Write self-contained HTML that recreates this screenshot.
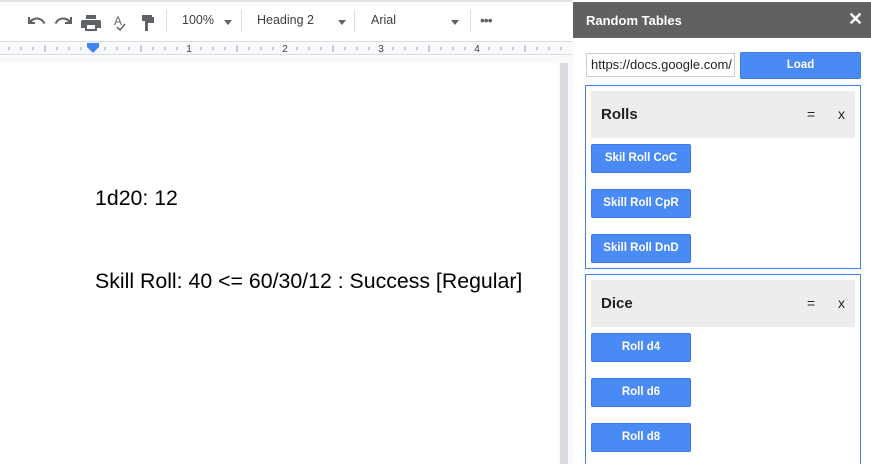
<!DOCTYPE html>
<html><head><style>
*{margin:0;padding:0;box-sizing:border-box}
html,body{width:871px;height:464px;overflow:hidden}
body{position:relative;background:#f8f9fa;font-family:"Liberation Sans",Arial,sans-serif}
.abs{position:absolute}
.tb{left:0;top:0;width:573px;height:42px;background:#fff;border-top:2px solid #e2e3e5;border-bottom:1px solid #dadce0}
.tt{font-size:12.5px;color:#3c4043;top:13px}
.sep{top:10px;width:1px;height:22px;background:#dadce0}
.arr{width:0;height:0;border-left:4.5px solid transparent;border-right:4.5px solid transparent;border-top:5px solid #5f6368;top:20px}
.ruler{left:0;top:42px;width:573px;height:13px;background:#f8f9fa;border-bottom:1px solid #dadce0}
.page{left:0;top:63px;width:558px;height:401px;background:#fff}
.doc{font-size:21.3px;color:#000;left:95px;white-space:nowrap}
.side{left:573px;top:0;width:298px;height:464px;background:#fff}
.hdr{left:573px;top:2px;width:298px;height:36px;background:#616161;color:#fff;font-weight:bold;font-size:13px}
.btn{background:#4a8af4;border:1px solid #3b7ae8;border-radius:2px;color:#fff;font-weight:bold;font-size:11.5px;text-align:center;width:100px;height:29px;line-height:27px;left:591px}
.panel{left:585px;width:276px;border:1px solid #3b82f0}
.ph{left:591px;width:264px;height:47px;background:#ededed;font-weight:bold;font-size:15px;color:#222}
</style></head><body>
<div class="abs tb"></div>
<svg class="abs" style="left:26px;top:12px" width="140" height="20" viewBox="0 0 140 20" fill="#5f6368">
<path d="M4 9 L4 4 L2 4 L2 11 L9 11 L9 9 L5.5 9 C7 7.5 9 6.5 11 6.5 C14 6.5 16.5 8.5 17.5 11 L19.3 10.3 C18 7 15 4.5 11 4.5 C8.3 4.5 5.8 5.5 4 7.2Z" transform="translate(0,1)"/>
<path d="M34 9 L34 4 L36 4 L36 11 L29 11 L29 9 L32.5 9 C31 7.5 29 6.5 27 6.5 C24 6.5 21.5 8.5 20.5 11 L18.7 10.3 C20 7 23 4.5 27 4.5 C29.7 4.5 32.2 5.5 34 7.2Z" transform="translate(10,1)"/>
<path d="M60 3h10v4h-10z M57 8h16a2 2 0 0 1 2 2v6h-4v3h-12v-3h-4v-6a2 2 0 0 1 2-2z M61 13v4h8v-4z"/>
<text x="88" y="13" font-size="12" font-family="Liberation Sans" fill="#5f6368">A</text>
<path d="M91 15 l3 3 l5 -6" stroke="#5f6368" stroke-width="1.5" fill="none"/>
<path d="M116 3h10v6h-10z M126 5h2v6h-6v8h-3v-10h7z"/>
</svg>
<div class="abs sep" style="left:166px"></div>
<div class="abs tt" style="left:182px">100%</div><div class="abs arr" style="left:224px"></div>
<div class="abs sep" style="left:241px"></div>
<div class="abs tt" style="left:257px">Heading 2</div><div class="abs arr" style="left:338px"></div>
<div class="abs sep" style="left:354px"></div>
<div class="abs tt" style="left:371px">Arial</div><div class="abs arr" style="left:451px"></div>
<div class="abs sep" style="left:470px"></div>
<div class="abs" style="left:480px;top:12px;font-size:14px;color:#5f6368;letter-spacing:-1px">•••</div>
<div class="abs ruler"></div>
<svg class="abs" style="left:0;top:42px" width="573" height="14">
<g stroke="#9aa0a6" stroke-width="1">
<line x1="9" y1="5" x2="9" y2="8"/><line x1="21" y1="5" x2="21" y2="8"/><line x1="33" y1="5" x2="33" y2="8"/><line x1="45" y1="3" x2="45" y2="10"/><line x1="57" y1="5" x2="57" y2="8"/><line x1="69" y1="5" x2="69" y2="8"/><line x1="81" y1="5" x2="81" y2="8"/>
<line x1="105" y1="5" x2="105" y2="8"/><line x1="117" y1="5" x2="117" y2="8"/><line x1="129" y1="5" x2="129" y2="8"/><line x1="141" y1="3" x2="141" y2="10"/><line x1="153" y1="5" x2="153" y2="8"/><line x1="165" y1="5" x2="165" y2="8"/><line x1="177" y1="5" x2="177" y2="8"/>
<line x1="201" y1="5" x2="201" y2="8"/><line x1="213" y1="5" x2="213" y2="8"/><line x1="225" y1="5" x2="225" y2="8"/><line x1="237" y1="3" x2="237" y2="10"/><line x1="249" y1="5" x2="249" y2="8"/><line x1="261" y1="5" x2="261" y2="8"/><line x1="273" y1="5" x2="273" y2="8"/>
<line x1="297" y1="5" x2="297" y2="8"/><line x1="309" y1="5" x2="309" y2="8"/><line x1="321" y1="5" x2="321" y2="8"/><line x1="333" y1="3" x2="333" y2="10"/><line x1="345" y1="5" x2="345" y2="8"/><line x1="357" y1="5" x2="357" y2="8"/><line x1="369" y1="5" x2="369" y2="8"/>
<line x1="393" y1="5" x2="393" y2="8"/><line x1="405" y1="5" x2="405" y2="8"/><line x1="417" y1="5" x2="417" y2="8"/><line x1="429" y1="3" x2="429" y2="10"/><line x1="441" y1="5" x2="441" y2="8"/><line x1="453" y1="5" x2="453" y2="8"/><line x1="465" y1="5" x2="465" y2="8"/>
<line x1="489" y1="5" x2="489" y2="8"/><line x1="501" y1="5" x2="501" y2="8"/><line x1="513" y1="5" x2="513" y2="8"/><line x1="525" y1="3" x2="525" y2="10"/><line x1="537" y1="5" x2="537" y2="8"/><line x1="549" y1="5" x2="549" y2="8"/><line x1="561" y1="5" x2="561" y2="8"/>
</g>
<g font-size="10" fill="#3c4043" font-family="Liberation Sans" text-anchor="middle"><text x="189" y="10">1</text><text x="285" y="10">2</text><text x="381" y="10">3</text><text x="477" y="10">4</text></g>
<rect x="87" y="1" width="12" height="4" fill="#4285f4"/><path d="M87 5h12l-6 6z" fill="#4285f4"/>
</svg>
<div class="abs page"></div>
<div class="abs" style="left:560px;top:63px;width:8px;height:401px;background:#dadce0"></div>
<div class="abs doc" style="top:186px">1d20: 12</div>
<div class="abs doc" style="top:269px">Skill Roll: 40 &lt;= 60/30/12 : Success [Regular]</div>
<div class="abs side"></div>
<div class="abs hdr"><span class="abs" style="left:13px;top:11px">Random Tables</span><span class="abs" style="left:275px;top:7px;font-size:18px">✕</span></div>
<div class="abs" style="left:586px;top:53px;width:149px;height:24px;border:1px solid #ccc;font-size:13px;line-height:22px;padding-left:4px;color:#222;overflow:hidden;white-space:nowrap">https://docs.google.com/</div>
<div class="abs btn" style="left:740px;top:52px;width:121px;height:27px;line-height:25px">Load</div>
<div class="abs panel" style="top:85px;height:184px"></div>
<div class="abs ph" style="top:91px"><span class="abs" style="left:10px;top:15px">Rolls</span><span class="abs" style="left:216px;top:15px;font-weight:normal;font-size:14px">=</span><span class="abs" style="left:247px;top:15px;font-weight:normal;font-size:14px">x</span></div>
<div class="abs btn" style="top:144px">Skil Roll CoC</div>
<div class="abs btn" style="top:189px">Skill Roll CpR</div>
<div class="abs btn" style="top:234px">Skill Roll DnD</div>
<div class="abs panel" style="top:274px;height:200px"></div>
<div class="abs ph" style="top:280px"><span class="abs" style="left:10px;top:15px">Dice</span><span class="abs" style="left:216px;top:15px;font-weight:normal;font-size:14px">=</span><span class="abs" style="left:247px;top:15px;font-weight:normal;font-size:14px">x</span></div>
<div class="abs btn" style="top:333px">Roll d4</div>
<div class="abs btn" style="top:378px">Roll d6</div>
<div class="abs btn" style="top:423px">Roll d8</div>
</body></html>
